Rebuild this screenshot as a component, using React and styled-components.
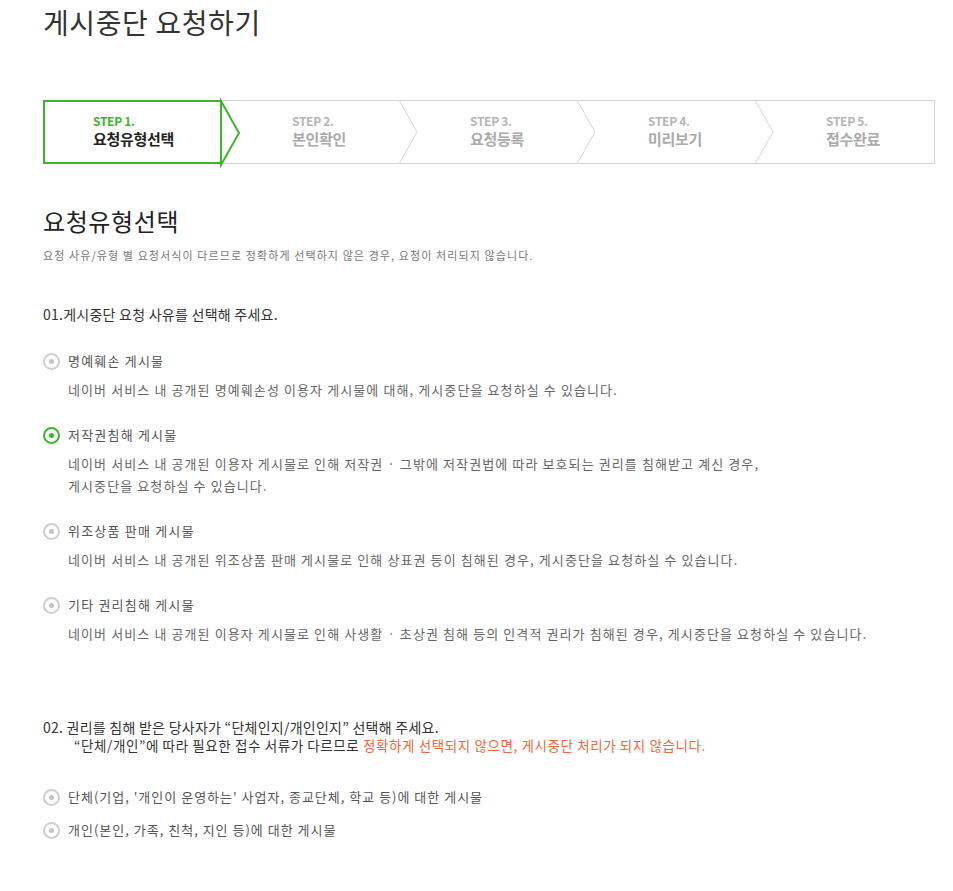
import React, { useState } from 'react';
import styled, { createGlobalStyle } from 'styled-components';

const GlobalStyle = createGlobalStyle`
  body {
    margin: 0;
    background: #fff;
    font-family: "Noto Sans CJK KR", "Noto Sans", sans-serif;
    color: #333;
  }
`;

const Page = styled.div`
  padding: 4px 0 40px 43px;
  width: 892px;
`;

const Title = styled.h1`
  margin: 0;
  font-size: 28px;
  font-weight: 400;
  line-height: 36px;
  color: #333;
  letter-spacing: 0.6px;
`;

const StepBar = styled.ol`
  list-style: none;
  margin: 60px 0 0;
  padding: 0;
  display: flex;
  height: 62px;
  border: 1px solid #d6d6d6;
`;

const Step = styled.li`
  position: relative;
  box-sizing: border-box;
  flex: none;
  width: 20%;
  display: flex;
  flex-direction: column;
  justify-content: center;
  gap: 1px;
  padding-bottom: 4px;
  padding-left: ${p => (p.$first ? '48px' : '70px')};
  ${p =>
    p.$active &&
    `
    margin: -1px 0 -1px -1px;
    width: calc(20% + 1px);
    border: 2px solid #3db52b;
    border-right: 0;
  `}
`;

const StepNo = styled.span`
  font-size: 12px;
  font-weight: 700;
  line-height: 15px;
  letter-spacing: -0.3px;
  color: ${p => (p.$active ? '#3db52b' : '#b5b5b5')};
`;

const StepName = styled.span`
  font-size: 15px;
  font-weight: 700;
  line-height: 19px;
  letter-spacing: -0.3px;
  color: ${p => (p.$active ? '#222' : '#aaa')};
`;

const Chevron = styled.svg`
  position: absolute;
  top: ${p => (p.$active ? '-2px' : '-1px')};
  right: -19px;
  width: 20px;
  height: ${p => (p.$active ? '66px' : '64px')};
  z-index: 1;
  overflow: visible;
`;

const SectionTitle = styled.h2`
  margin: 41px 0 0;
  font-size: 24px;
  font-weight: 400;
  line-height: 32px;
  color: #222;
  letter-spacing: 0.6px;
`;

const Lead = styled.p`
  margin: 10px 0 0;
  font-size: 11px;
  line-height: 16px;
  color: #777;
  letter-spacing: 1.1px;
`;

const Question = styled.p`
  margin: ${p => p.$top} 0 0;
  font-size: 14px;
  line-height: 20px;
  color: #333;
  letter-spacing: 0.25px;
`;

const Note = styled.span`
  display: block;
  padding-left: 31px;
  font-size: 13.5px;
  line-height: 17px;
  letter-spacing: 0.6px;
`;

const Warn = styled.em`
  font-style: normal;
  color: #f0663a;
`;

const OptionList = styled.ul`
  list-style: none;
  margin: ${p => p.$top} 0 0;
  padding: 0;
  display: flex;
  flex-direction: column;
  gap: ${p => p.$gap};
`;

const Option = styled.li`
  cursor: pointer;
`;

const OptionRow = styled.label`
  display: flex;
  align-items: center;
  gap: 8px;
  font-size: 13px;
  line-height: 18px;
  color: #555;
  letter-spacing: ${p => p.$spacing || '1.2px'};
  cursor: pointer;
`;

const Radio = styled.span`
  flex: none;
  width: 13px;
  height: 13px;
  border-radius: 50%;
  border: 2px solid ${p => (p.$checked ? '#3db52b' : '#cfcfcf')};
  display: flex;
  align-items: center;
  justify-content: center;
  &::after {
    content: '';
    width: 5px;
    height: 5px;
    border-radius: 50%;
    background: ${p => (p.$checked ? '#3db52b' : '#c4c4c4')};
  }
`;

const Desc = styled.p`
  margin: 9px 0 0 25px;
  font-size: 13px;
  line-height: 22px;
  color: #666;
  letter-spacing: 1.1px;
`;

const steps = ['요청유형선택', '본인확인', '요청등록', '미리보기', '접수완료'];

const reasons = [
  {
    label: '명예훼손 게시물',
    desc: ['네이버 서비스 내 공개된 명예훼손성 이용자 게시물에 대해, 게시중단을 요청하실 수 있습니다.'],
  },
  {
    label: '저작권침해 게시물',
    desc: [
      '네이버 서비스 내 공개된 이용자 게시물로 인해 저작권 · 그밖에 저작권법에 따라 보호되는 권리를 침해받고 계신 경우,',
      '게시중단을 요청하실 수 있습니다.',
    ],
  },
  {
    label: '위조상품 판매 게시물',
    desc: ['네이버 서비스 내 공개된 위조상품 판매 게시물로 인해 상표권 등이 침해된 경우, 게시중단을 요청하실 수 있습니다.'],
  },
  {
    label: '기타 권리침해 게시물',
    desc: ['네이버 서비스 내 공개된 이용자 게시물로 인해 사생활 · 초상권 침해 등의 인격적 권리가 침해된 경우, 게시중단을 요청하실 수 있습니다.'],
  },
];

const parties = [
  "단체(기업, '개인이 운영하는' 사업자, 종교단체, 학교 등)에 대한 게시물",
  '개인(본인, 가족, 친척, 지인 등)에 대한 게시물',
];

export default function App() {
  const [reason, setReason] = useState(1);
  const [party, setParty] = useState(null);

  return (
    <>
      <GlobalStyle />
      <Page>
        <Title>게시중단 요청하기</Title>

        <StepBar>
          {steps.map((name, i) => {
            const active = i === 0;
            return (
              <Step key={name} $first={i === 0} $active={active}>
                <StepNo $active={active}>STEP {i + 1}.</StepNo>
                <StepName $active={active}>{name}</StepName>
                {i < steps.length - 1 && (
                  <Chevron $active={active} viewBox={active ? '0 0 20 66' : '0 0 20 64'} preserveAspectRatio="none">
                    {active ? (
                      <polygon points="0,1 18,33 0,65" fill="#fff" stroke="#3db52b" strokeWidth="2" />
                    ) : (
                      <polyline points="0,0 18,32 0,64" fill="#fff" stroke="#d6d6d6" strokeWidth="1" />
                    )}
                  </Chevron>
                )}
              </Step>
            );
          })}
        </StepBar>

        <SectionTitle>요청유형선택</SectionTitle>
        <Lead>요청 사유/유형 별 요청서식이 다르므로 정확하게 선택하지 않은 경우, 요청이 처리되지 않습니다.</Lead>

        <Question $top="41px">01.게시중단 요청 사유를 선택해 주세요.</Question>

        <OptionList $top="28px" $gap="25px">
          {reasons.map((r, i) => (
            <Option key={r.label} onClick={() => setReason(i)}>
              <OptionRow>
                <Radio $checked={reason === i} />
                {r.label}
              </OptionRow>
              <Desc>
                {r.desc.map((line, j) => (
                  <React.Fragment key={j}>
                    {j > 0 && <br />}
                    {line}
                  </React.Fragment>
                ))}
              </Desc>
            </Option>
          ))}
        </OptionList>

        <Question $top="72px">
          02. 권리를 침해 받은 당사자가 “단체인지/개인인지” 선택해 주세요.
          <Note>
            “단체/개인”에 따라 필요한 접수 서류가 다르므로{' '}
            <Warn>정확하게 선택되지 않으면, 게시중단 처리가 되지 않습니다.</Warn>
          </Note>
        </Question>

        <OptionList $top="34px" $gap="15px">
          {parties.map((p, i) => (
            <Option key={p} onClick={() => setParty(i)}>
              <OptionRow $spacing="1px">
                <Radio $checked={party === i} />
                {p}
              </OptionRow>
            </Option>
          ))}
        </OptionList>
      </Page>
    </>
  );
}
